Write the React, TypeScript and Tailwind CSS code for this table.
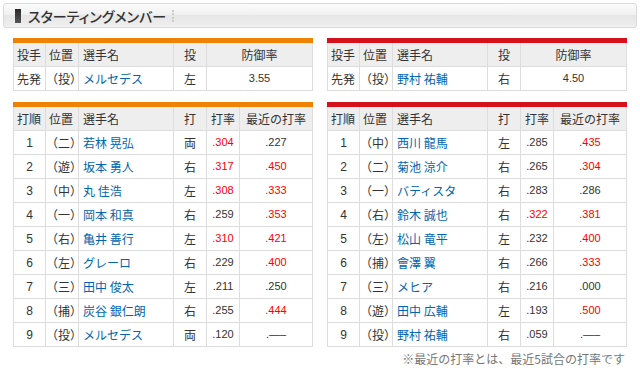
import React from "react";

type Cell = { t: string; red?: boolean };
type Bat = { o: string; pos: string; name: string; hand: string; avg: Cell; recent: Cell };

const leftBat: Bat[] = [
  { o: "1", pos: "（二）", name: "若林 晃弘", hand: "両", avg: { t: ".304", red: true }, recent: { t: ".227" } },
  { o: "2", pos: "（遊）", name: "坂本 勇人", hand: "右", avg: { t: ".317", red: true }, recent: { t: ".450", red: true } },
  { o: "3", pos: "（中）", name: "丸 佳浩", hand: "左", avg: { t: ".308", red: true }, recent: { t: ".333", red: true } },
  { o: "4", pos: "（一）", name: "岡本 和真", hand: "右", avg: { t: ".259" }, recent: { t: ".353", red: true } },
  { o: "5", pos: "（右）", name: "亀井 善行", hand: "左", avg: { t: ".310", red: true }, recent: { t: ".421", red: true } },
  { o: "6", pos: "（左）", name: "グレーロ", hand: "右", avg: { t: ".229" }, recent: { t: ".400", red: true } },
  { o: "7", pos: "（三）", name: "田中 俊太", hand: "左", avg: { t: ".211" }, recent: { t: ".250" } },
  { o: "8", pos: "（捕）", name: "炭谷 銀仁朗", hand: "右", avg: { t: ".255" }, recent: { t: ".444", red: true } },
  { o: "9", pos: "（投）", name: "メルセデス", hand: "両", avg: { t: ".120" }, recent: { t: ".—–" } },
];

const rightBat: Bat[] = [
  { o: "1", pos: "（中）", name: "西川 龍馬", hand: "左", avg: { t: ".285" }, recent: { t: ".435", red: true } },
  { o: "2", pos: "（二）", name: "菊池 涼介", hand: "右", avg: { t: ".265" }, recent: { t: ".304", red: true } },
  { o: "3", pos: "（一）", name: "バティスタ", hand: "右", avg: { t: ".283" }, recent: { t: ".286" } },
  { o: "4", pos: "（右）", name: "鈴木 誠也", hand: "右", avg: { t: ".322", red: true }, recent: { t: ".381", red: true } },
  { o: "5", pos: "（左）", name: "松山 竜平", hand: "左", avg: { t: ".232" }, recent: { t: ".400", red: true } },
  { o: "6", pos: "（捕）", name: "會澤 翼", hand: "右", avg: { t: ".266" }, recent: { t: ".333", red: true } },
  { o: "7", pos: "（三）", name: "メヒア", hand: "右", avg: { t: ".216" }, recent: { t: ".000" } },
  { o: "8", pos: "（遊）", name: "田中 広輔", hand: "左", avg: { t: ".193" }, recent: { t: ".500", red: true } },
  { o: "9", pos: "（投）", name: "野村 祐輔", hand: "右", avg: { t: ".059" }, recent: { t: ".—–" } },
];

const cellBase = "h-[24px] border-b border-r border-[#dddddd] flex items-center whitespace-nowrap";
const num = "font-['Liberation_Sans','Noto_Sans_CJK_JP',sans-serif] text-[11px]";

function PitcherTable({ bar, role, pos, name, hand, era }: { bar: string; role: string; pos: string; name: string; hand: string; era: string }) {
  return (
    <div className={`w-[300px] border-t-[5px] ${bar}`}>
      <div className="grid grid-cols-[33px_33px_95px_33px_106px]">
        <div className={`${cellBase} border-l bg-[#eeeeee] pl-[3px]`}>投手</div>
        <div className={`${cellBase} bg-[#eeeeee] pl-[3px]`}>位置</div>
        <div className={`${cellBase} bg-[#eeeeee] pl-[4px]`}>選手名</div>
        <div className={`${cellBase} bg-[#eeeeee] justify-center`}>投</div>
        <div className={`${cellBase} bg-[#eeeeee] justify-center`}>防御率</div>
        <div className={`${cellBase} border-l pl-[3px]`}>{role}</div>
        <div className={`${cellBase} pl-[0px]`}>{pos}</div>
        <div className={`${cellBase} pl-[4px] text-[#0066b0]`}>{name}</div>
        <div className={`${cellBase} justify-center`}>{hand}</div>
        <div className={`${cellBase} justify-center ${num}`}>{era}</div>
      </div>
    </div>
  );
}

function BatTable({ bar, rows }: { bar: string; rows: Bat[] }) {
  return (
    <div className={`w-[300px] border-t-[5px] ${bar}`}>
      <div className="grid grid-cols-[33px_33px_95px_33px_33px_73px]">
        <div className={`${cellBase} border-l bg-[#eeeeee] pl-[3px]`}>打順</div>
        <div className={`${cellBase} bg-[#eeeeee] pl-[3px]`}>位置</div>
        <div className={`${cellBase} bg-[#eeeeee] pl-[4px]`}>選手名</div>
        <div className={`${cellBase} bg-[#eeeeee] justify-center`}>打</div>
        <div className={`${cellBase} bg-[#eeeeee] justify-center`}>打率</div>
        <div className={`${cellBase} bg-[#eeeeee] justify-center`}>最近の打率</div>
        {rows.map((r) => (
          <React.Fragment key={r.o}>
            <div className={`${cellBase} border-l justify-center ${num} text-[12px]`}>{r.o}</div>
            <div className={`${cellBase}`}>{r.pos}</div>
            <div className={`${cellBase} pl-[4px] text-[#0066b0]`}>{r.name}</div>
            <div className={`${cellBase} justify-center`}>{r.hand}</div>
            <div className={`${cellBase} justify-center ${num} ${r.avg.red ? "text-[#ff0000]" : ""}`}>{r.avg.t}</div>
            <div className={`${cellBase} justify-center ${num} ${r.recent.red ? "text-[#ff0000]" : ""}`}>{r.recent.t}</div>
          </React.Fragment>
        ))}
      </div>
    </div>
  );
}

export default function App() {
  return (
    <div className="w-[640px] h-[374px] bg-white pt-[3px] px-[3px] text-[12px] text-[#333333] font-['Noto_Sans_CJK_JP',sans-serif] overflow-hidden">
      <div className="h-[25px] rounded-[3px] border border-[#d9d9d9] bg-[linear-gradient(#fbfbfb,#f1f1f1_45%,#e6e6e6_50%,#ededed_90%,#f3f3f3)] flex items-center pl-[11px]">
        <div className="w-[6px] h-[14px] bg-[linear-gradient(#2a2a2a,#555555)]" />
        <div className="ml-[7px] text-[14px] leading-none text-[#333333] font-medium [font-feature-settings:'palt']">スターティングメンバー</div>
        <div className="ml-[6px] h-[12px] border-l-2 border-dotted border-[#cccccc]" />
      </div>
      <div className="px-[10px] mt-[10px] grid grid-cols-[300px_300px] gap-x-[14px]">
        <PitcherTable bar="border-[#ef8200]" role="先発" pos="（投）" name="メルセデス" hand="左" era="3.55" />
        <PitcherTable bar="border-[#d7101e]" role="先発" pos="（投）" name="野村 祐輔" hand="右" era="4.50" />
        <div className="mt-[11px]">
          <BatTable bar="border-[#ef8200]" rows={leftBat} />
        </div>
        <div className="mt-[11px]">
          <BatTable bar="border-[#d7101e]" rows={rightBat} />
          <div className="mt-[4px] leading-[16px] text-right pr-[2px] text-[#777777]">※最近の打率とは、最近5試合の打率です</div>
        </div>
      </div>
    </div>
  );
}
